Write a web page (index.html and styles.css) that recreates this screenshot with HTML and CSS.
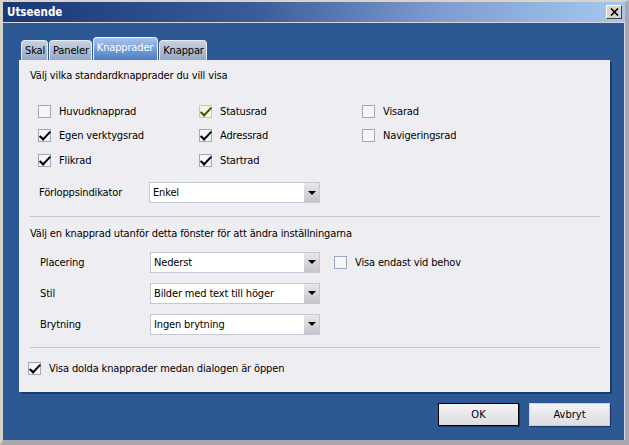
FILE: index.html
```html
<!DOCTYPE html>
<html lang="sv">
<head>
    <meta charset="UTF-8">
    <title>Utseende</title>
    <link rel="stylesheet" href="styles.css">
</head>
<body>
    <div class="window">
        <div class="titlebar">
            <span class="title">Utseende</span>
            <button class="close-btn" aria-label="Stäng">
                <svg width="9" height="8" viewBox="0 0 9 8"><path d="M1 0.5 L8 7.5 M8 0.5 L1 7.5" stroke="#000" stroke-width="1.6"/></svg>
            </button>
        </div>

        <div class="client">
            <div class="tabs">
                <div class="tab">Skal</div>
                <div class="tab">Paneler</div>
                <div class="tab active">Knapprader</div>
                <div class="tab">Knappar</div>
            </div>

            <div class="panel">
                <div class="section">
                    <div class="section-title">Välj vilka standardknapprader du vill visa</div>
                    <div class="check-grid">
                        <label class="check"><span class="box"></span>Huvudknapprad</label>
                        <label class="check"><span class="box hover checked"></span>Statusrad</label>
                        <label class="check"><span class="box"></span>Visarad</label>
                        <label class="check"><span class="box checked"></span>Egen verktygsrad</label>
                        <label class="check"><span class="box checked"></span>Adressrad</label>
                        <label class="check"><span class="box"></span>Navigeringsrad</label>
                        <label class="check"><span class="box checked"></span>Flikrad</label>
                        <label class="check"><span class="box checked"></span>Startrad</label>
                    </div>
                    <div class="field first">
                        <span class="field-label">Förloppsindikator</span>
                        <div class="select">Enkel<span class="arrow"></span></div>
                    </div>
                </div>

                <div class="section middle">
                    <div class="section-title">Välj en knapprad utanför detta fönster för att ändra inställningarna</div>
                    <div class="field">
                        <span class="field-label">Placering</span>
                        <div class="select">Nederst<span class="arrow"></span></div>
                        <label class="check inline"><span class="box"></span>Visa endast vid behov</label>
                    </div>
                    <div class="field">
                        <span class="field-label">Stil</span>
                        <div class="select">Bilder med text till höger<span class="arrow"></span></div>
                    </div>
                    <div class="field">
                        <span class="field-label">Brytning</span>
                        <div class="select">Ingen brytning<span class="arrow"></span></div>
                    </div>
                </div>

                <div class="section last">
                    <label class="check"><span class="box checked"></span>Visa dolda knapprader medan dialogen är öppen</label>
                </div>
            </div>

            <div class="actions">
                <button class="btn default">OK</button>
                <button class="btn">Avbryt</button>
            </div>
        </div>
    </div>
</body>
</html>
```

FILE: styles.css
```css
:root {
    --frame: #d8d4c8;
    --client: #2c5894;
    --panel: #eeeef2;
    --line: #c4c6d0;
    --box-border: #9ca8c0;
    --text: #000000;
}

* {
    box-sizing: border-box;
}

body {
    margin: 0;
    font-family: "DejaVu Sans Condensed", "Liberation Sans", sans-serif;
    font-size: 11px;
    letter-spacing: -0.15px;
    color: var(--text);
    background: var(--client);
}

.window {
    width: 629px;
    height: 445px;
    display: flex;
    flex-direction: column;
    border-left: 3px solid var(--frame);
    border-top: 2px solid var(--frame);
    border-right: 4px solid #a8a8b0;
    border-bottom: 5px solid #a8a8b0;
    background: var(--client);
}

.titlebar {
    height: 21px;
    display: flex;
    align-items: center;
    justify-content: space-between;
    padding: 0 3px;
    background: linear-gradient(to right, #1a3878 0%, #3a5a98 40%, #7e9cd0 70%, #a6c8ee 100%);
    border-bottom: 1px solid #d8d4d8;
}

.title {
    color: #fff;
    font-weight: bold;
    font-size: 11.5px;
    letter-spacing: 0;
    padding-left: 1px;
}

.close-btn {
    width: 16px;
    height: 14px;
    padding: 0;
    display: flex;
    align-items: center;
    justify-content: center;
    background: #d8d4cc;
    border: 1px solid;
    border-color: #fff #404040 #404040 #fff;
}

.client {
    flex: 1;
    display: flex;
    flex-direction: column;
    padding: 14px 12px 0 16px;
    border-right: 1px solid #d8d8e0;
}

.tabs {
    display: flex;
    align-items: flex-end;
    padding-left: 2px;
    height: 23px;
}

.tab {
    height: 20px;
    padding: 3px 2px 0 3px;
    margin-right: 1px;
    border: 1px solid #e8ecf4;
    border-bottom: none;
    border-radius: 4px 4px 0 0;
    background: linear-gradient(to bottom, #c8d2e0, #94a8c4);
}

.tab.active {
    height: 23px;
    padding: 3px 4px 0 3px;
    color: #fff;
    background: linear-gradient(to bottom, #a8c4ec, #4a7cc4);
    border-color: #f0f4fa;
}

.panel {
    width: 591px;
    height: 332px;
    background: var(--panel);
    box-shadow: 2px 2px 0 #1c3c6c;
    padding: 0 10px 0 11px;
    display: flex;
    flex-direction: column;
}

.section {
    border-bottom: 1px solid var(--line);
}

.section-title {
    height: 15px;
    margin-top: 9px;
}

.check-grid {
    display: grid;
    grid-template-columns: 161px 163px auto;
    grid-auto-rows: 24.5px;
    padding: 15px 0 0 8px;
}

.check {
    display: flex;
    align-items: center;
    gap: 8px;
}

.box {
    width: 13px;
    height: 13px;
    border: 1px solid var(--box-border);
    background: #f6f6f8;
    position: relative;
}

/* bock ritad som vinklad kant */
.box.checked::after {
    content: "";
    position: absolute;
    left: 3px;
    top: -1px;
    width: 4px;
    height: 9px;
    border: solid #000;
    border-width: 0 2.5px 2.5px 0;
    transform: skew(-6deg) rotate(40deg);
}

.box.hover {
    background: #f6f6dc;
    border-color: #c8ccb0;
}

.box.hover::after {
    border-color: #4c5018;
}

.field {
    display: flex;
    align-items: center;
    height: 31px;
    padding-left: 10px;
}

.field.first {
    margin-top: 9px;
    height: 22px;
    margin-bottom: 12px;
    padding-left: 9px;
}

.field-label {
    width: 110px;
}

.select {
    width: 170px;
    height: 21px;
    display: flex;
    align-items: center;
    justify-content: space-between;
    padding-left: 3px;
    background: #fff;
    border: 1px solid #c4c8d4;
}

.field.first .select {
    width: 171px;
}

.arrow {
    width: 16px;
    height: 19px;
    background: linear-gradient(to bottom, #e8e8ec, #c4c4cc);
    border-left: 1px solid #fff;
    display: flex;
    align-items: center;
    justify-content: center;
}

.arrow::before {
    content: "";
    border-left: 4px solid transparent;
    border-right: 4px solid transparent;
    border-top: 4px solid #000;
}

.check.inline {
    margin-left: 14px;
}

.section.middle .section-title {
    margin-top: 10px;
    margin-bottom: 5px;
}

.section.middle {
    padding-bottom: 7px;
}

.section.last {
    border-bottom: none;
    padding-top: 14px;
    margin-left: -2px;
}

.actions {
    display: flex;
    justify-content: flex-end;
    gap: 10px;
    padding-top: 11px;
    padding-right: 2px;
}

.btn {
    width: 81px;
    height: 23px;
    font-family: inherit;
    font-size: 11px;
    background: linear-gradient(to bottom, #f4f4f6, #dcdce2);
    border: 1px solid #d0d0d8;
    box-shadow: 1px 1px 0 #1c3464;
}

.btn.default {
    border: 1px solid #000;
}
```
